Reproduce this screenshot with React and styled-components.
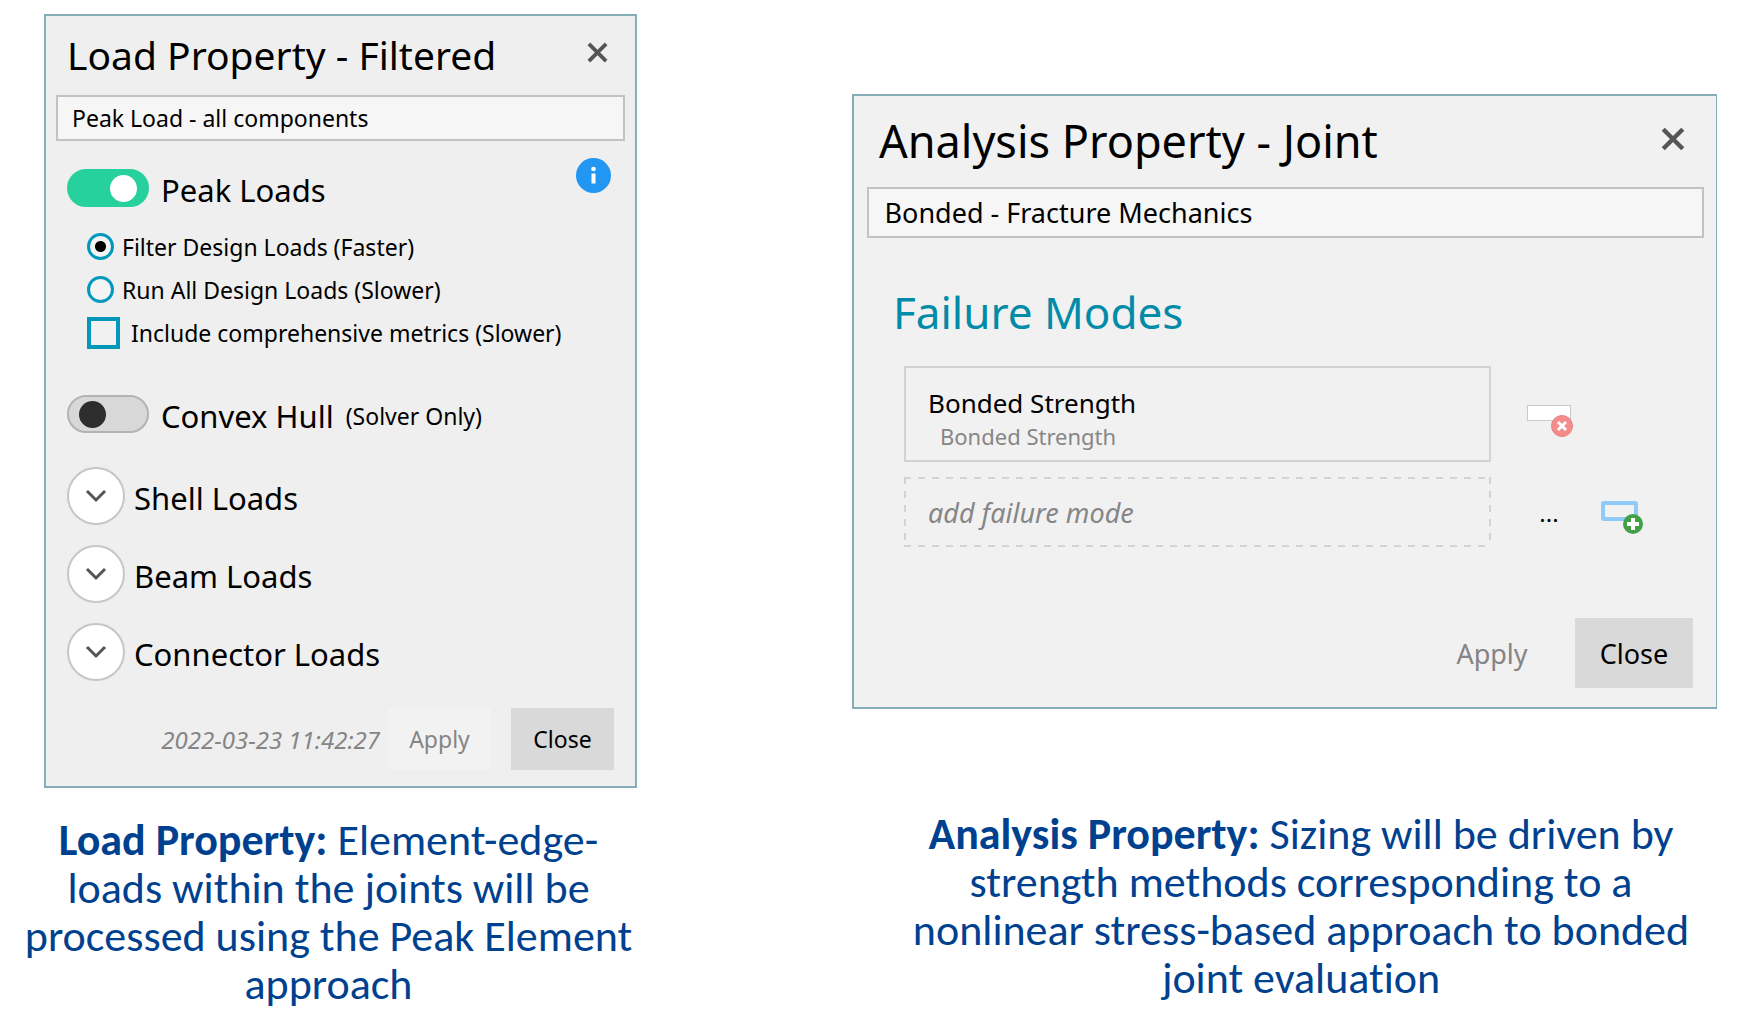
import { useState } from "react";
import styled, { createGlobalStyle } from "styled-components";

const loadGroups = ["Shell Loads", "Beam Loads", "Connector Loads"];

function CloseIcon({ size }) {
  return (
    <svg width={size} height={size} viewBox="0 0 24 24" aria-hidden="true">
      <path d="M3 3L21 21M21 3L3 21" stroke="#555555" strokeWidth="4" />
    </svg>
  );
}

function ChevronIcon() {
  return (
    <svg width="22" height="14" viewBox="0 0 22 14" aria-hidden="true">
      <path d="M2 2L11 11L20 2" fill="none" stroke="#555555" strokeWidth="3" />
    </svg>
  );
}

function InfoIcon() {
  return (
    <svg width="35" height="35" viewBox="0 0 35 35" aria-hidden="true">
      <circle cx="17.5" cy="17.5" r="17.5" fill="#2196f3" />
      <circle cx="17.5" cy="11" r="2.3" fill="#ffffff" />
      <rect x="15.5" y="15.5" width="4" height="10" fill="#ffffff" />
    </svg>
  );
}

function RemoveIcon() {
  return (
    <svg width="48" height="48" viewBox="0 0 48 48" aria-hidden="true">
      <rect x="2.5" y="15.5" width="43" height="15" fill="#ffffff" stroke="#c3ccd3" />
      <circle cx="37" cy="36" r="10.5" fill="#f58c8c" stroke="#ea8080" />
      <path d="M33 32L41 40M41 32L33 40" stroke="#ffffff" strokeWidth="3" />
    </svg>
  );
}

function AddIcon() {
  return (
    <svg width="48" height="48" viewBox="0 0 48 48" aria-hidden="true">
      <rect x="4" y="15" width="33" height="16" rx="1" fill="none" stroke="#90caf9" strokeWidth="4" />
      <circle cx="34" cy="36" r="10" fill="#43a047" />
      <path d="M34 30V42M28 36H40" stroke="#ffffff" strokeWidth="4" />
    </svg>
  );
}

function LoadProperty() {
  const [name, setName] = useState("Peak Load - all components");
  const [peak, setPeak] = useState(true);
  const [hull, setHull] = useState(false);
  const [mode, setMode] = useState("filter");
  const [metrics, setMetrics] = useState(false);

  return (
    <Panel>
      <Header>
        <Title>Load Property - Filtered</Title>
        <IconButton aria-label="Close panel">
          <CloseIcon size={23} />
        </IconButton>
      </Header>
      <NameInput
        aria-label="Load property name"
        value={name}
        onChange={(e) => setName(e.target.value)}
      />
      <LoadBody>
        <ToggleRow>
          <ToggleLabel>
            <Toggle
              type="checkbox"
              role="switch"
              checked={peak}
              onChange={(e) => setPeak(e.target.checked)}
            />
            <RowName>Peak Loads</RowName>
          </ToggleLabel>
          <InfoButton aria-label="Peak loads information">
            <InfoIcon />
          </InfoButton>
        </ToggleRow>
        <Options>
          <Option>
            <Radio
              type="radio"
              name="mode"
              checked={mode === "filter"}
              onChange={() => setMode("filter")}
            />
            Filter Design Loads (Faster)
          </Option>
          <Option>
            <Radio
              type="radio"
              name="mode"
              checked={mode === "all"}
              onChange={() => setMode("all")}
            />
            Run All Design Loads (Slower)
          </Option>
          <Option $gap="11px">
            <Checkbox
              type="checkbox"
              checked={metrics}
              onChange={(e) => setMetrics(e.target.checked)}
            />
            Include comprehensive metrics (Slower)
          </Option>
        </Options>
        <ToggleRow>
          <ToggleLabel>
            <Toggle
              type="checkbox"
              role="switch"
              checked={hull}
              onChange={(e) => setHull(e.target.checked)}
            />
            <RowName>Convex Hull</RowName>
            <Hint>(Solver Only)</Hint>
          </ToggleLabel>
        </ToggleRow>
        <Groups>
          {loadGroups.map((group) => (
            <Group key={group}>
              <ExpandButton aria-label={`Expand ${group}`}>
                <ChevronIcon />
              </ExpandButton>
              <RowName>{group}</RowName>
            </Group>
          ))}
        </Groups>
      </LoadBody>
      <LoadFooter>
        <Timestamp>2022-03-23 11:42:27</Timestamp>
        <Buttons>
          <Button disabled>Apply</Button>
          <Button>Close</Button>
        </Buttons>
      </LoadFooter>
    </Panel>
  );
}

function AnalysisProperty() {
  const [name, setName] = useState("Bonded - Fracture Mechanics");

  return (
    <Panel $thinRight>
      <Header $large>
        <Title $large>Analysis Property - Joint</Title>
        <IconButton aria-label="Close panel">
          <CloseIcon size={26} />
        </IconButton>
      </Header>
      <NameInput
        $large
        aria-label="Analysis property name"
        value={name}
        onChange={(e) => setName(e.target.value)}
      />
      <SectionTitle>Failure Modes</SectionTitle>
      <Modes>
        <ModeRow>
          <ModeCard>
            <ModeName>Bonded Strength</ModeName>
            <ModeType>Bonded Strength</ModeType>
          </ModeCard>
          <Actions>
            <ActionButton aria-label="Remove failure mode">
              <RemoveIcon />
            </ActionButton>
          </Actions>
        </ModeRow>
        <ModeRow>
          <AddInput aria-label="Add failure mode" placeholder="add failure mode" />
          <Actions>
            <ActionButton aria-label="Browse failure modes">...</ActionButton>
            <ActionButton aria-label="Add">
              <AddIcon />
            </ActionButton>
          </Actions>
        </ModeRow>
      </Modes>
      <AnalysisFooter>
        <Button $large $flat disabled>
          Apply
        </Button>
        <Button $large>Close</Button>
      </AnalysisFooter>
    </Panel>
  );
}

function App() {
  return (
    <>
      <GlobalStyle />
      <Page>
        <LoadColumn>
          <LoadProperty />
          <Caption>
            <strong>Load Property:</strong> Element-edge-loads within the joints
            will be processed using the Peak Element approach
          </Caption>
        </LoadColumn>
        <AnalysisColumn>
          <AnalysisProperty />
          <Caption $inset>
            <strong>Analysis Property:</strong> Sizing will be driven by strength
            methods corresponding to a nonlinear stress-based approach to bonded
            joint evaluation
          </Caption>
        </AnalysisColumn>
      </Page>
    </>
  );
}

const GlobalStyle = createGlobalStyle`
  * {
    box-sizing: border-box;
  }
  body {
    margin: 0;
    background: #ffffff;
    color: #000000;
    font-family: "Noto Sans", sans-serif;
  }
  button,
  input {
    margin: 0;
    font-family: inherit;
    color: inherit;
  }
  svg {
    display: block;
  }
`;

const Page = styled.main`
  display: grid;
  grid-template-columns: 617fr 898fr;
  column-gap: 215px;
  align-items: start;
  padding: 14px 5px 0 20px;
`;

const LoadColumn = styled.section`
  > div {
    margin-left: 24px;
  }
`;

const AnalysisColumn = styled.section`
  padding-top: 80px;

  > div {
    margin-right: 33px;
  }
`;

const Panel = styled.div`
  border: 2px solid #86aeb9;
  border-right-width: ${(props) => (props.$thinRight ? "1px" : "2px")};
  background: ${(props) => (props.$thinRight ? "#f1f1f1" : "#efefef")};
`;

const Header = styled.header`
  display: flex;
  align-items: center;
  justify-content: space-between;
  height: ${(props) => (props.$large ? "91px" : "79px")};
  padding: ${(props) => (props.$large ? "0 30px 2px 25px" : "0 26px 2px 21px")};
`;

const Title = styled.h1`
  margin: 0;
  font-size: ${(props) => (props.$large ? "45px" : "39px")};
  font-weight: 400;
  line-height: 56px;
  white-space: nowrap;
`;

const IconButton = styled.button`
  padding: 0 0 4px;
  border: 0;
  background: none;
`;

const NameInput = styled.input`
  display: block;
  width: calc(100% - ${(props) => (props.$large ? "25px" : "20px")});
  height: ${(props) => (props.$large ? "51px" : "46px")};
  margin: 0 auto;
  padding: 0 ${(props) => (props.$large ? "16px" : "14px")};
  border: 2px solid #c2c2c2;
  background: #f6f6f6;
  font-size: ${(props) => (props.$large ? "27px" : "23px")};
`;

const LoadBody = styled.div`
  padding: 17px 24px 0 21px;
`;

const ToggleRow = styled.div`
  display: flex;
  justify-content: space-between;
  height: 60px;
`;

const ToggleLabel = styled.label`
  display: flex;
  align-items: center;
  gap: 12px;
`;

const RowName = styled.span`
  padding-top: 3px;
  font-size: 31px;
`;

const Toggle = styled.input`
  appearance: none;
  display: flex;
  align-items: center;
  justify-content: flex-start;
  width: 82px;
  height: 38px;
  padding: 0 10px;
  border: 2px solid #b3b3b3;
  border-radius: 19px;
  background: #d8d8d8;

  &::before {
    content: "";
    width: 27px;
    height: 27px;
    border-radius: 50%;
    background: #2d2d2d;
  }
  &:checked {
    justify-content: flex-end;
    border-color: #27d19d;
    background: #27d19d;
  }
  &:checked::before {
    background: #ffffff;
  }
`;

const InfoButton = styled(IconButton)`
  align-self: flex-start;
`;

const Hint = styled.span`
  padding-top: 3px;
  font-size: 23px;
`;

const Options = styled.div`
  margin: 7px 0 30px;
  padding-left: 20px;
`;

const Option = styled.label`
  display: flex;
  align-items: center;
  gap: ${(props) => props.$gap || "8px"};
  height: 43px;
  font-size: 23px;
  white-space: nowrap;
`;

const Radio = styled.input`
  appearance: none;
  width: 27px;
  height: 27px;
  border: 3px solid #0099bc;
  border-radius: 50%;
  background: #f4f4f4;

  &:checked {
    background: radial-gradient(circle, #000000 5px, #f4f4f4 6px);
  }
`;

const Checkbox = styled.input`
  appearance: none;
  width: 33px;
  height: 32px;
  border: 4px solid #0099bc;
  background: #f1f1f1;

  &:checked {
    background: #0099bc;
  }
`;

const Groups = styled.ul`
  display: flex;
  flex-direction: column;
  gap: 20px;
  margin: 23px 0 0;
  padding: 0;
  list-style: none;
`;

const Group = styled.li`
  display: flex;
  align-items: center;
  gap: 9px;
  height: 58px;
`;

const ExpandButton = styled.button`
  display: flex;
  align-items: center;
  justify-content: center;
  width: 58px;
  height: 58px;
  padding: 0;
  border: 2px solid #c6c6c6;
  border-radius: 50%;
  background: #ffffff;
`;

const LoadFooter = styled.footer`
  display: flex;
  align-items: center;
  justify-content: flex-end;
  gap: 8px;
  padding: 27px 21px 16px;
`;

const Timestamp = styled.time`
  color: #858585;
  font-size: 24px;
  font-style: italic;
`;

const Buttons = styled.div`
  display: flex;
  gap: 20px;
`;

const Button = styled.button`
  width: ${(props) => (props.$large ? "118px" : "103px")};
  height: ${(props) => (props.$large ? "70px" : "62px")};
  padding: 0;
  border: 0;
  background: #d9d9d9;
  font-size: ${(props) => (props.$large ? "27px" : "23px")};

  &:disabled {
    background: ${(props) => (props.$flat ? "none" : "#f2f2f2")};
    color: #858585;
  }
`;

const SectionTitle = styled.h2`
  margin: 46px 0 26px 39px;
  color: #008ba8;
  font-size: 44px;
  font-weight: 400;
  line-height: 56px;
`;

const Modes = styled.div`
  display: flex;
  flex-direction: column;
  gap: 15px;
  padding-left: 50px;
`;

const ModeRow = styled.div`
  display: grid;
  grid-template-columns: 1fr 225px;
  align-items: center;
`;

const ModeCard = styled.div`
  padding: 17px 22px 9px;
  border: 2px solid #d3d3d3;
`;

const ModeName = styled.div`
  font-size: 26px;
  line-height: 36px;
`;

const ModeType = styled.div`
  padding-left: 12px;
  color: #868686;
  font-size: 22px;
  line-height: 30px;
`;

/* long dashes, drawn as one gradient per side */
const dashes = (angle) =>
  `repeating-linear-gradient(${angle}, #d3d3d3 0 7px, transparent 7px 14px)`;

const AddInput = styled.input`
  width: 100%;
  height: 70px;
  padding: 0 24px;
  border: 0;
  background:
    ${dashes("90deg")} top / 100% 2px no-repeat,
    ${dashes("90deg")} bottom / 100% 2px no-repeat,
    ${dashes("180deg")} left / 2px 100% no-repeat,
    ${dashes("180deg")} right / 2px 100% no-repeat;
  font-size: 27px;

  &::placeholder {
    color: #868686;
    font-style: italic;
    opacity: 1;
  }
`;

const Actions = styled.div`
  display: flex;
  gap: 26px;
  padding-left: 34px;
`;

const ActionButton = styled.button`
  width: 48px;
  height: 48px;
  padding: 0;
  border: 0;
  background: none;
  font-size: 24px;
`;

const AnalysisFooter = styled.footer`
  display: flex;
  justify-content: flex-end;
  gap: 24px;
  padding: 71px 23px 19px;
`;

const Caption = styled.p`
  margin: ${(props) => (props.$inset ? "101px" : "28px")} 0 0;
  padding: 0 ${(props) => (props.$inset ? "50px" : "0")};
  color: #00418f;
  font-family: Calibri, Carlito, Lato, sans-serif;
  font-size: 44px;
  font-variant-ligatures: none;
  line-height: 48px;
  text-align: center;
`;

export default App;
